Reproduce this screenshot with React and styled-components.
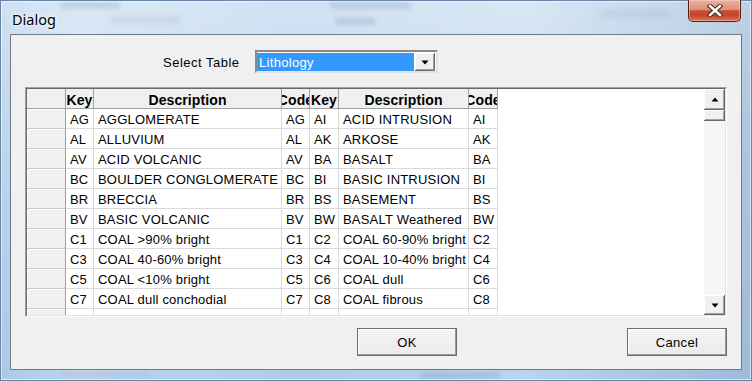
import React from 'react';
import styled, { createGlobalStyle } from 'styled-components';

const Global = createGlobalStyle`
  html, body { margin: 0; padding: 0; background: #a9c6e4; }
  body { font-family: "Liberation Sans", Arial, sans-serif; }
  * { box-sizing: border-box; }
`;

const Window = styled.div`
  position: relative;
  width: 752px;
  height: 381px;
  display: flex;
  flex-direction: column;
  padding: 0 10px 11px 10px;
  overflow: hidden;
  background:
    linear-gradient(90deg, rgba(255,255,255,0.0) 0%, rgba(255,255,255,0.25) 10%, rgba(255,255,255,0.05) 40%, rgba(255,255,255,0.2) 70%, rgba(80,110,150,0.15) 100%),
    linear-gradient(180deg, #cfe1f3 0%, #bcd4ec 40%, #aac8e6 100%);
  box-shadow: inset 0 0 0 1px #6a86a6, inset 0 0 0 2px rgba(255,255,255,0.55);
`;

const Ghost = styled.span`
  position: absolute;
  left: ${p => p.x}px;
  top: ${p => p.y}px;
  width: ${p => p.w}px;
  height: ${p => p.h}px;
  background: ${p => p.c || 'rgba(90,110,140,0.18)'};
  filter: blur(${p => p.b || 2}px);
  border-radius: 2px;
`;

const TitleBar = styled.div`
  position: relative;
  height: 34px;
  display: flex;
  align-items: flex-start;
  justify-content: space-between;
  flex-shrink: 0;
`;

const Title = styled.div`
  padding: 9px 0 0 2px;
  font-family: "Noto Sans", "Open Sans", sans-serif;
  font-size: 14.5px;
  line-height: 20px;
  color: #000;
  text-shadow: 0 0 6px #fff, 0 0 3px #fff;
`;

const CloseButton = styled.div`
  width: 53px;
  height: 22px;
  margin-right: 1px;
  border: 1px solid #5a1f14;
  border-top: none;
  border-radius: 0 0 5px 5px;
  display: flex;
  align-items: center;
  justify-content: center;
  background: linear-gradient(180deg, #eab3a5 0%, #dd8e7a 45%, #c84a30 52%, #c9482e 75%, #dc7456 100%);
  box-shadow: inset 0 0 0 1px rgba(255,220,210,0.45);
`;

const Client = styled.div`
  flex: 1;
  display: flex;
  flex-direction: column;
  background: #f0f0f0;
  border: 1px solid #6f7a86;
`;

const SelectRow = styled.div`
  display: flex;
  align-items: center;
  height: 23px;
  margin: 15px 0 0 152px;
`;

const Label = styled.div`
  width: 92px;
  padding-top: 1px;
  font-size: 13px;
  letter-spacing: 0.5px;
  color: #000;
`;

const Combo = styled.div`
  width: 183px;
  height: 23px;
  display: flex;
  border: 2px solid;
  border-color: #8a8a8a #e3e3e3 #e3e3e3 #8a8a8a;
  background: #fff;
  padding: 1px 1px 0 0;
`;

const ComboValue = styled.div`
  flex: 1;
  background: #3399ff;
  color: #fff;
  font-size: 13px;
  letter-spacing: 0.3px;
  line-height: 19px;
  padding-left: 2px;
  height: 18px;
`;

const raised = `
  background: #f0f0f0;
  box-shadow: inset -1px -1px #696969, inset 1px 1px #fff, inset -2px -2px #a0a0a0, inset 2px 2px #f0f0f0;
`;

const ComboButton = styled.div`
  width: 20px;
  height: 18px;
  margin-left: 1px;
  display: flex;
  align-items: center;
  justify-content: center;
  ${raised}
`;

const GridFrame = styled.div`
  width: 702px;
  height: 230px;
  margin: 14px 0 0 14px;
  border: 1px solid;
  border-color: #a0a0a0 #fff #fff #a0a0a0;
`;

const GridInner = styled.div`
  width: 100%;
  height: 100%;
  display: flex;
  border: 1px solid;
  border-color: #696969 #e3e3e3 #e3e3e3 #696969;
  background: #fff;
`;

const TableArea = styled.div`
  flex: 1;
  overflow: hidden;
  background: #fff;
`;

const COLS = '39px 28px 188px 28px 29px 130px 29px';

const Row = styled.div`
  display: grid;
  grid-template-columns: ${COLS};
  height: 20px;
  width: 471px;
`;

const HeadCell = styled.div`
  display: flex;
  justify-content: center;
  align-items: center;
  padding-top: 2px;
  overflow: hidden;
  white-space: nowrap;
  background: #f0f0f0;
  border-right: 1px solid #a0a0a0;
  border-bottom: 1px solid #a0a0a0;
  font-size: 14px;
  letter-spacing: 0.1px;
  font-weight: bold;
  color: #000;
`;

const RowHead = styled.div`
  background: #f0f0f0;
  border-right: 1px solid #a0a0a0;
  border-bottom: 1px solid #c8c8c8;
  box-shadow: inset 1px 1px #fff;
`;

const Cell = styled.div`
  overflow: hidden;
  white-space: nowrap;
  padding: 1px 0 0 4px;
  font-size: 13px;
  letter-spacing: 0.2px;
  line-height: 19px;
  color: #000;
  border-right: 1px solid #dadada;
  border-bottom: 1px solid #dadada;
`;

const ScrollBar = styled.div`
  width: 21px;
  display: flex;
  flex-direction: column;
  background-color: #fff;
  background-image: repeating-conic-gradient(#eeeeee 0 25%, #ffffff 0 50%);
  background-size: 2px 2px;
`;

const ScrollButton = styled.div`
  height: ${p => p.h}px;
  display: flex;
  align-items: center;
  justify-content: center;
  flex-shrink: 0;
  ${raised}
`;

const Track = styled.div`
  flex: 1;
`;

const ButtonRow = styled.div`
  display: flex;
  margin: 11px 14px 0 346px;
`;

const DialogButton = styled.div`
  width: 100px;
  height: 28px;
  display: flex;
  align-items: center;
  justify-content: center;
  font-size: 13px;
  letter-spacing: 0.3px;
  color: #000;
  border: 1px solid #6d6d6d;
  background: linear-gradient(180deg, #f4f4f4 0%, #ebebeb 100%);
  box-shadow: inset -1px -1px #9a9a9a, inset 1px 1px #ffffff;
  margin-left: ${p => (p.right ? 'auto' : '0')};
`;

const Tri = ({ up }) => (
  <svg width="8" height="5" viewBox="0 0 8 5">
    <polygon points={up ? '0.5,4.5 7.5,4.5 4,0.5' : '0.5,0.5 7.5,0.5 4,4.5'} fill="#000" />
  </svg>
);

const left = [
  ['AG', 'AGGLOMERATE', 'AG'],
  ['AL', 'ALLUVIUM', 'AL'],
  ['AV', 'ACID VOLCANIC', 'AV'],
  ['BC', 'BOULDER CONGLOMERATE', 'BC'],
  ['BR', 'BRECCIA', 'BR'],
  ['BV', 'BASIC VOLCANIC', 'BV'],
  ['C1', 'COAL >90% bright', 'C1'],
  ['C3', 'COAL 40-60% bright', 'C3'],
  ['C5', 'COAL <10% bright', 'C5'],
  ['C7', 'COAL dull conchodial', 'C7'],
  ['C9', 'CG Haematite rock', 'C9'],
];
const right = [
  ['AI', 'ACID INTRUSION', 'AI'],
  ['AK', 'ARKOSE', 'AK'],
  ['BA', 'BASALT', 'BA'],
  ['BI', 'BASIC INTRUSION', 'BI'],
  ['BS', 'BASEMENT', 'BS'],
  ['BW', 'BASALT Weathered', 'BW'],
  ['C2', 'COAL 60-90% bright', 'C2'],
  ['C4', 'COAL 10-40% bright', 'C4'],
  ['C6', 'COAL dull', 'C6'],
  ['C8', 'COAL fibrous', 'C8'],
  ['CA', 'CALCITE', 'CA'],
];

export default function App() {
  return (
    <>
      <Global />
      <Window>
        <Ghost x={60} y={2} w={60} h={7} />
        <Ghost x={110} y={16} w={70} h={8} c="rgba(120,140,170,0.12)" />
        <Ghost x={330} y={2} w={80} h={7} />
        <Ghost x={335} y={18} w={40} h={7} />
        <Ghost x={600} y={10} w={70} h={8} c="rgba(120,140,170,0.14)" />
        <Ghost x={420} y={372} w={80} h={6} />
        <Ghost x={60} y={372} w={90} h={6} c="rgba(120,140,170,0.14)" />
        <TitleBar>
          <Title>Dialog</Title>
          <CloseButton>
            <svg width="16" height="13" viewBox="0 0 16 13">
              <path d="M3 2 L13 11 M13 2 L3 11" stroke="#4a2620" strokeWidth="4.6" strokeLinecap="square" />
              <path d="M3 2 L13 11 M13 2 L3 11" stroke="#ffffff" strokeWidth="2.6" strokeLinecap="square" />
            </svg>
          </CloseButton>
        </TitleBar>
        <Client>
          <SelectRow>
            <Label>Select Table</Label>
            <Combo>
              <ComboValue>Lithology</ComboValue>
              <ComboButton><Tri /></ComboButton>
            </Combo>
          </SelectRow>
          <GridFrame>
            <GridInner>
              <TableArea>
                <Row>
                  <HeadCell />
                  <HeadCell>Key</HeadCell>
                  <HeadCell>Description</HeadCell>
                  <HeadCell>Code</HeadCell>
                  <HeadCell>Key</HeadCell>
                  <HeadCell>Description</HeadCell>
                  <HeadCell>Code</HeadCell>
                </Row>
                {left.map((l, i) => (
                  <Row key={l[0]}>
                    <RowHead />
                    <Cell>{l[0]}</Cell>
                    <Cell>{l[1]}</Cell>
                    <Cell>{l[2]}</Cell>
                    <Cell>{right[i][0]}</Cell>
                    <Cell>{right[i][1]}</Cell>
                    <Cell>{right[i][2]}</Cell>
                  </Row>
                ))}
              </TableArea>
              <ScrollBar>
                <ScrollButton h={21}><Tri up /></ScrollButton>
                <ScrollButton h={11} />
                <Track />
                <ScrollButton h={20}><Tri /></ScrollButton>
              </ScrollBar>
            </GridInner>
          </GridFrame>
          <ButtonRow>
            <DialogButton>OK</DialogButton>
            <DialogButton right>Cancel</DialogButton>
          </ButtonRow>
        </Client>
      </Window>
    </>
  );
}
